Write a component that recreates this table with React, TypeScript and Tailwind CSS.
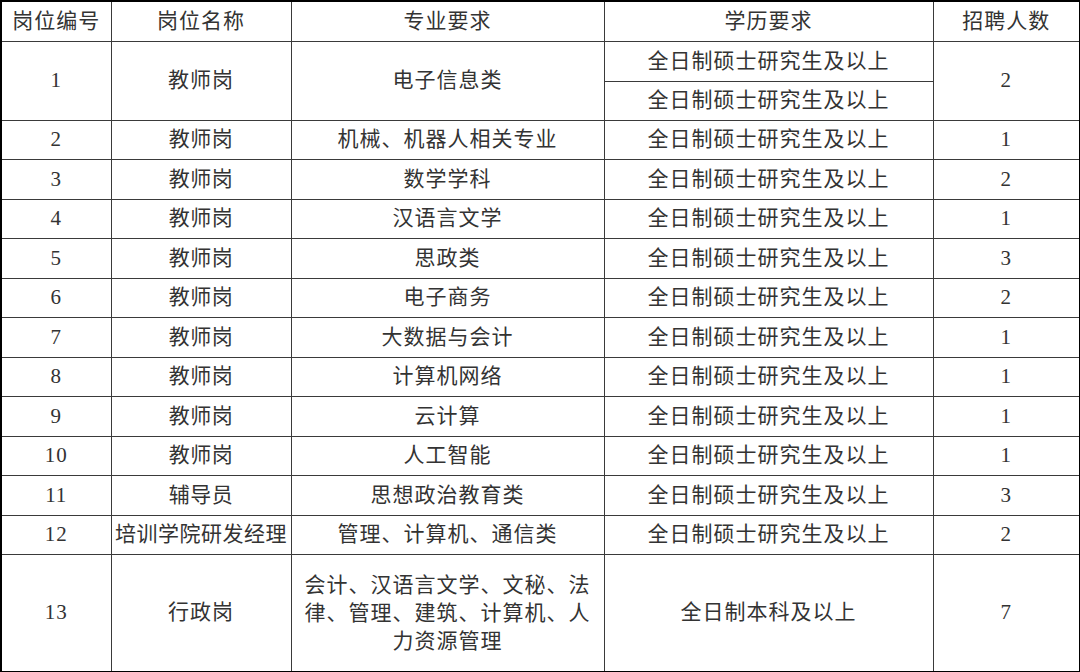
import React from "react";

const rows: [string, string, string, string][] = [
  ["2", "教师岗", "机械、机器人相关专业", "1"],
  ["3", "教师岗", "数学学科", "2"],
  ["4", "教师岗", "汉语言文学", "1"],
  ["5", "教师岗", "思政类", "3"],
  ["6", "教师岗", "电子商务", "2"],
  ["7", "教师岗", "大数据与会计", "1"],
  ["8", "教师岗", "计算机网络", "1"],
  ["9", "教师岗", "云计算", "1"],
  ["10", "教师岗", "人工智能", "1"],
  ["11", "辅导员", "思想政治教育类", "3"],
  ["12", "培训学院研发经理", "管理、计算机、通信类", "2"],
];

const edu = "全日制硕士研究生及以上";
const td = "border border-[#3a3a3a] text-center align-middle p-0";

export default function App() {
  return (
    <div
      className="w-[1080px] h-[672px] bg-white text-[#333333] text-[21px] tracking-[1px] leading-none overflow-hidden"
      style={{ fontFamily: '"Liberation Serif", "Noto Sans CJK SC", serif' }}
    >
      <table className="w-[1079px] table-fixed border-collapse border-2 border-black">
        <colgroup>
          <col className="w-[110px]" />
          <col className="w-[180px]" />
          <col className="w-[313px]" />
          <col className="w-[329px]" />
          <col className="w-[147px]" />
        </colgroup>
        <tbody>
          <tr className="h-[40px]">
            <td className={td}>岗位编号</td>
            <td className={td}>岗位名称</td>
            <td className={td}>专业要求</td>
            <td className={td}>学历要求</td>
            <td className={td}>招聘人数</td>
          </tr>
          <tr className="h-[40px]">
            <td className={td} rowSpan={2}>1</td>
            <td className={td} rowSpan={2}>教师岗</td>
            <td className={td} rowSpan={2}>电子信息类</td>
            <td className={td}>{edu}</td>
            <td className={td} rowSpan={2}>2</td>
          </tr>
          <tr className="h-[39px]">
            <td className={td}>{edu}</td>
          </tr>
          {rows.map((r) => (
            <tr key={r[0]} className="h-[39.5px]">
              <td className={td}>{r[0]}</td>
              <td className={`${td} whitespace-nowrap tracking-[0.5px]`}>{r[1]}</td>
              <td className={td}>{r[2]}</td>
              <td className={td}>{edu}</td>
              <td className={td}>{r[3]}</td>
            </tr>
          ))}
          <tr className="h-[117px]">
            <td className={td}>13</td>
            <td className={td}>行政岗</td>
            <td className={`${td} px-3 leading-[28px]`}>
              会计、汉语言文学、文秘、法律、管理、建筑、计算机、人力资源管理
            </td>
            <td className={td}>全日制本科及以上</td>
            <td className={td}>7</td>
          </tr>
        </tbody>
      </table>
    </div>
  );
}
